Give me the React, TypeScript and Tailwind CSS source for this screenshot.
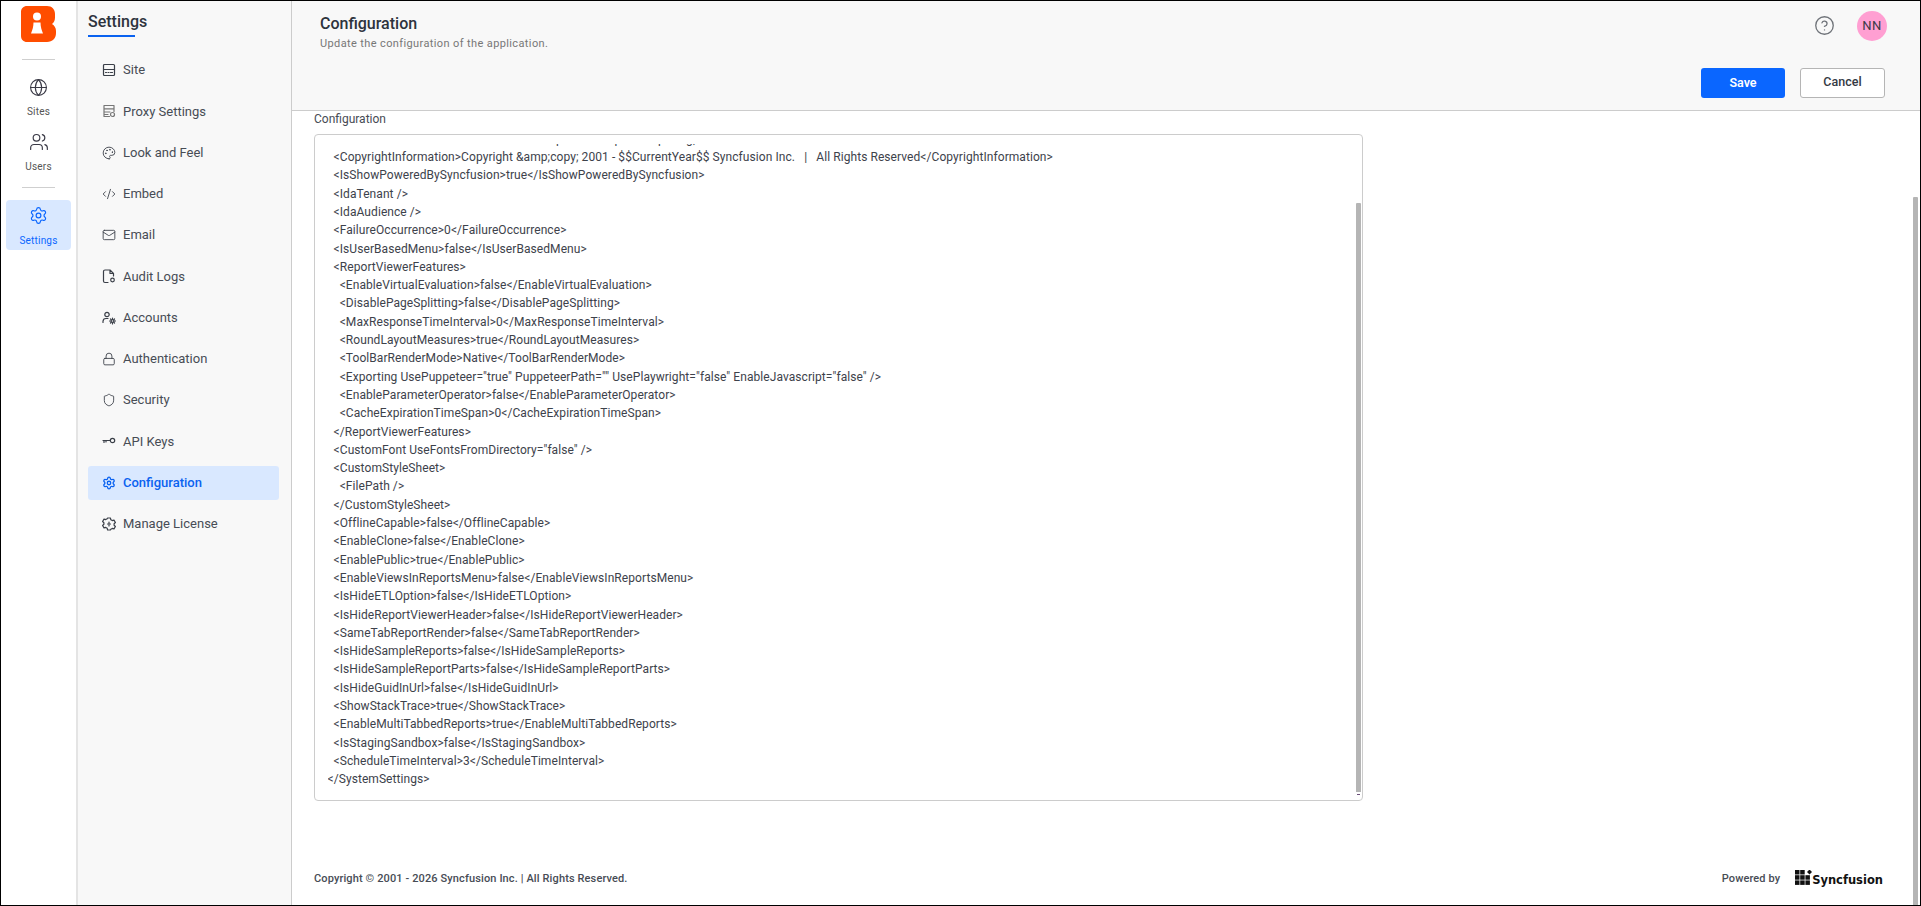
import React from "react";
import { Globe, Users, Settings, Mail, CodeXml, Palette, Lock, Shield, HelpCircle } from "lucide-react";

const clippedLine =
  "\u00a0".repeat(75) + "p" + "\u00a0".repeat(17) + "p" + "\u00a0".repeat(12) + "p" + "\u00a0".repeat(7) + "g,";

const xml = [
  clippedLine,
  "  <CopyrightInformation>Copyright &amp;copy; 2001 - $$CurrentYear$$ Syncfusion Inc.   |   All Rights Reserved</CopyrightInformation>",
  "  <IsShowPoweredBySyncfusion>true</IsShowPoweredBySyncfusion>",
  "  <IdaTenant />",
  "  <IdaAudience />",
  "  <FailureOccurrence>0</FailureOccurrence>",
  "  <IsUserBasedMenu>false</IsUserBasedMenu>",
  "  <ReportViewerFeatures>",
  "    <EnableVirtualEvaluation>false</EnableVirtualEvaluation>",
  "    <DisablePageSplitting>false</DisablePageSplitting>",
  "    <MaxResponseTimeInterval>0</MaxResponseTimeInterval>",
  "    <RoundLayoutMeasures>true</RoundLayoutMeasures>",
  "    <ToolBarRenderMode>Native</ToolBarRenderMode>",
  '    <Exporting UsePuppeteer="true" PuppeteerPath="" UsePlaywright="false" EnableJavascript="false" />',
  "    <EnableParameterOperator>false</EnableParameterOperator>",
  "    <CacheExpirationTimeSpan>0</CacheExpirationTimeSpan>",
  "  </ReportViewerFeatures>",
  '  <CustomFont UseFontsFromDirectory="false" />',
  "  <CustomStyleSheet>",
  "    <FilePath />",
  "  </CustomStyleSheet>",
  "  <OfflineCapable>false</OfflineCapable>",
  "  <EnableClone>false</EnableClone>",
  "  <EnablePublic>true</EnablePublic>",
  "  <EnableViewsInReportsMenu>false</EnableViewsInReportsMenu>",
  "  <IsHideETLOption>false</IsHideETLOption>",
  "  <IsHideReportViewerHeader>false</IsHideReportViewerHeader>",
  "  <SameTabReportRender>false</SameTabReportRender>",
  "  <IsHideSampleReports>false</IsHideSampleReports>",
  "  <IsHideSampleReportParts>false</IsHideSampleReportParts>",
  "  <IsHideGuidInUrl>false</IsHideGuidInUrl>",
  "  <ShowStackTrace>true</ShowStackTrace>",
  "  <EnableMultiTabbedReports>true</EnableMultiTabbedReports>",
  "  <IsStagingSandbox>false</IsStagingSandbox>",
  "  <ScheduleTimeInterval>3</ScheduleTimeInterval>",
  "</SystemSettings>",
];

const stroke = { fill: "none", stroke: "currentColor", strokeWidth: 1.2, strokeLinecap: "round" as const, strokeLinejoin: "round" as const };

const SiteIcon = () => (
  <svg width="14" height="14" viewBox="0 0 14 14" {...stroke}>
    <rect x="1.500" y="1.500" width="11" height="11" rx="1" />
    <path d="M1.500 6.500h11M3.500 9.500h1M6 9.500h1M8.500 9.500h2" />
  </svg>
);
const ProxyIcon = () => (
  <svg width="14" height="14" viewBox="0 0 14 14" {...stroke} className="text-[#777]">
    <path d="M7.500 12.500H2V1.500h10v6M2 4.800h10M2 8h6M2 10.500h4" />
    <circle cx="10.500" cy="10.500" r="2" />
  </svg>
);
const AuditIcon = () => (
  <svg width="14" height="15" viewBox="0 0 14 15" {...stroke}>
    <path d="M6 13.500H3a1.500 1.500 0 0 1-1.500-1.500V2.500A1.500 1.500 0 0 1 3 1h5l3.500 3.500V7M8 1v3.500h3.500" />
    <circle cx="10.500" cy="11" r="1.800" />
  </svg>
);
const AccountsIcon = () => (
  <svg width="14" height="14" viewBox="0 0 14 14" {...stroke}>
    <circle cx="5" cy="3.500" r="2.200" />
    <path d="M1 11.500v-1.200A3 3 0 0 1 4 7.500h2" />
    <circle cx="10.500" cy="10" r="1.400" />
    <path d="M10.500 7v1M10.500 12v1M7.500 10h1M12.500 10h1M8.500 8l.6.600M11.900 11.400l.6.600M12.500 8l-.6.600M9.100 11.400l-.6.600" />
  </svg>
);
const KeyIcon = () => (
  <svg width="14" height="14" viewBox="0 0 14 14" {...stroke}>
    <circle cx="10.500" cy="6.500" r="2.200" />
    <path d="M8.300 6.500H1M2 6.500v2M4 6.500v1.500" />
  </svg>
);
const LicenseIcon = () => (
  <svg width="14" height="14" viewBox="0 0 14 14" {...stroke}>
    <path d="M5.600 1h2.800l.4 1.700 1.500.9 1.700-.5 1.400 2.400-1.300 1.200v1.600l1.300 1.200-1.400 2.400-1.700-.5-1.500.9L8.400 13H5.600l-.4-1.700-1.500-.9-1.700.5L.6 8.500 1.900 7.300V5.700L.6 4.500 2 2.100l1.700.5 1.500-.9z" />
    <path d="M7 5v1M7 8v1M5.500 7h3" />
  </svg>
);
const lucide = { size: 14, strokeWidth: 1.5 };

const navItems: { label: string; icon: React.ReactNode; active?: boolean }[] = [
  { label: "Site", icon: <SiteIcon /> },
  { label: "Proxy Settings", icon: <ProxyIcon /> },
  { label: "Look and Feel", icon: <Palette {...lucide} /> },
  { label: "Embed", icon: <CodeXml {...lucide} /> },
  { label: "Email", icon: <Mail {...lucide} /> },
  { label: "Audit Logs", icon: <AuditIcon /> },
  { label: "Accounts", icon: <AccountsIcon /> },
  { label: "Authentication", icon: <Lock {...lucide} /> },
  { label: "Security", icon: <Shield {...lucide} /> },
  { label: "API Keys", icon: <KeyIcon /> },
  { label: "Configuration", icon: <Settings size={14} strokeWidth={2.2} className="text-[#0a62f0]" />, active: true },
  { label: "Manage License", icon: <LicenseIcon /> },
];

const Logo = () => (
  <svg width="35" height="36" viewBox="0 0 35 36">
    <path
      d="M6 0h20c5 0 8 3.500 8 8v3.500c0 3-1 5-3 6.500 2.500 1.500 4 4 4 7v2c0 5.500-3.500 9-9 9H6c-3.500 0-6-2.500-6-6V6c0-3.500 2.500-6 6-6z"
      fill="#ff4d00"
    />
    <circle cx="16" cy="10.500" r="4" fill="#fff" />
    <path d="M12.500 16.500h7c0 4 1.200 8 2.500 11H10c1.300-3 2.500-7 2.500-11z" fill="#fff" />
  </svg>
);

const SyncfusionMark = () => (
  <svg width="17" height="15" viewBox="0 0 17 15" fill="#111">
    <rect x="0" y="0" width="4.500" height="4.500" />
    <rect x="5.200" y="0" width="4.500" height="4.500" />
    <rect x="0" y="5.200" width="4.500" height="4.500" />
    <rect x="5.200" y="5.200" width="4.500" height="4.500" />
    <rect x="10.400" y="5.200" width="4.500" height="4.500" />
    <rect x="0" y="10.400" width="4.500" height="4.500" />
    <rect x="5.200" y="10.400" width="4.500" height="4.500" />
    <rect x="10.400" y="10.400" width="4.500" height="4.500" />
    <path d="M14.500 -0.500l2.500 2.500-2.500 2.500-2.500-2.500z" />
  </svg>
);

function RailItem({ icon, label, active }: { icon: React.ReactNode; label: string; active?: boolean }) {
  return (
    <div
      className={
        active
          ? "w-[65px] h-[50px] rounded-[4px] bg-[#d9e8ff] text-[#0a66ff] flex flex-col items-center pt-[6px]"
          : "w-[65px] flex flex-col items-center text-[#3a3a46]"
      }
    >
      {icon}
      <span className={active ? "text-[10px] leading-[12px] mt-[10px] tracking-[0.2px]" : "text-[10px] leading-[12px] mt-[9px] text-[#555] tracking-[0.2px]"}>{label}</span>
    </div>
  );
}

export default function App() {
  return (
    <div className="w-screen h-screen overflow-hidden border border-black bg-white flex font-['Roboto',sans-serif] text-[#343a44] relative">
      <aside className="w-[75px] shrink-0 bg-white flex flex-col items-center pt-[5px]">
        <Logo />
        <div className="w-[33px] h-px bg-[#cfcfcf] mt-[17px]" />
        <div className="mt-[18px]">
          <RailItem icon={<Globe size={19} strokeWidth={1.4} />} label="Sites" />
        </div>
        <div className="mt-[14px]">
          <RailItem icon={<Users size={20} strokeWidth={1.4} />} label="Users" />
        </div>
        <div className="w-[33px] h-px bg-[#cfcfcf] mt-[14px]" />
        <div className="mt-[12px]">
          <RailItem active icon={<Settings size={19} strokeWidth={1.5} />} label="Settings" />
        </div>
      </aside>

      <nav className="w-[216px] shrink-0 bg-[#f8f8f8] border-l-2 border-r border-l-[#e4e4e4] border-r-[#cccccc] pl-[10px] pr-[12px]">
        <div className="pt-[11px] h-[52px]">
          <h2 className="text-[16px] leading-[20px] font-medium text-[#2d333d]">Settings</h2>
          <div className="w-[47px] h-[2px] bg-[#0a62f0] mt-[3px]" />
        </div>
        <ul className="flex flex-col gap-[7.25px]">
          {navItems.map((it) => (
            <li
              key={it.label}
              className={
                it.active
                  ? "h-[34px] rounded-[3px] bg-[#d9e8ff] text-[#0a62f0] font-medium flex items-center pl-[14px] gap-[7px] text-[13px]"
                  : "h-[34px] flex items-center pl-[14px] gap-[7px] text-[13px] text-[#474c55]"
              }
            >
              <span className="w-[14px] h-[14px] flex items-center justify-center shrink-0 text-[#3a3f48]">{it.icon}</span>
              {it.label}
            </li>
          ))}
        </ul>
      </nav>

      <main className="flex-1 min-w-0 flex flex-col">
        <header className="h-[110px] shrink-0 bg-[#f8f8f8] border-b border-[#cccccc] pl-[28px] pr-[35px] flex flex-col">
          <div className="flex justify-between h-[67px]">
            <div className="pt-[13px]">
              <h1 className="text-[16px] leading-[20px] font-medium text-[#2d333d]">Configuration</h1>
              <p className="text-[11px] leading-[14px] mt-[3px] text-[#777] tracking-[0.38px]">Update the configuration of the application.</p>
            </div>
            <div className="flex items-start pt-[10px] -mr-[2px] gap-[22px]">
              <span className="mt-[4px] text-[#6f7379]"><HelpCircle size={21} strokeWidth={1.5} /></span>
              <div className="w-[30px] h-[30px] rounded-full bg-[#ff9fd2] flex items-center justify-center text-[13px] text-[#3a3a46] tracking-[0.4px]">NN</div>
            </div>
          </div>
          <div className="flex justify-end gap-[15px]">
            <button className="w-[84px] h-[30px] rounded-[3px] bg-[#0a66ff] text-white text-[12.5px] font-semibold pt-[1px]">Save</button>
            <button className="w-[85px] h-[30px] rounded-[3px] bg-white border border-[#b5b5b5] text-[#343a44] text-[12.5px] font-medium pb-[1px]">Cancel</button>
          </div>
        </header>

        <div className="flex-1 min-h-0 flex flex-col pl-[22px] pr-[35px]">
          <label className="text-[12px] leading-[14px] text-[#474c55] pt-[1px]">Configuration</label>
          <div className="relative mt-[8px] w-[1049px] h-[667px] shrink-0 border border-[#cccccc] rounded-[4px] pt-[9px] pb-[11.500px] pl-[12.500px] flex flex-col">
            <div className="flex-1 min-h-0 overflow-hidden flex flex-col justify-end">
              <pre className="font-['Roboto',sans-serif] text-[12px] leading-[18.3px] tracking-[0.07px] text-[#3d424b] whitespace-pre">
                {xml.join("\n")}
              </pre>
            </div>
            <div className="absolute right-[1px] top-[68px] bottom-[8px] w-[5px] bg-[#b5b5b5] rounded-t-[1px]" />
            <div className="absolute right-[2px] bottom-[5px] w-[3px] h-px bg-[#6b4f7a]" />
          </div>
          <footer className="flex-1 flex items-end justify-between pb-[18px]">
            <span className="text-[11px] leading-[16px] font-medium text-[#474c55] tracking-[0.12px]">Copyright © 2001 - 2026 Syncfusion Inc. | All Rights Reserved.</span>
            <div className="flex items-center gap-[15px] mr-[2px]">
              <span className="text-[11px] leading-[16px] font-medium text-[#474c55] tracking-[0.1px]">Powered by</span>
              <div className="flex items-end">
                <div className="mb-[2px]">
                  <SyncfusionMark />
                </div>
                <span className="font-['DejaVu_Sans',sans-serif] font-bold text-[11.5px] leading-[14px] text-[#111]">Syncfusion</span>
              </div>
            </div>
          </footer>
        </div>
      </main>

      <div className="absolute right-[2px] top-[196px] bottom-0 w-[5px] bg-[#b5b5b5] rounded-t-[1px]" />
    </div>
  );
}
